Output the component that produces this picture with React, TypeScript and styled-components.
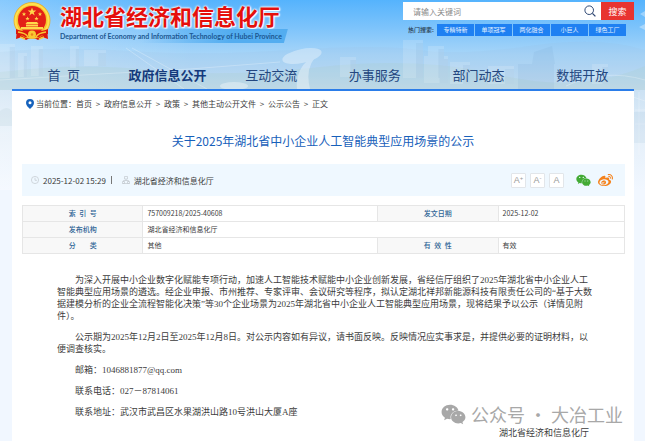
import React from "react";
import styled, { createGlobalStyle } from "styled-components";
import { FaWeixin, FaWeibo } from "react-icons/fa";

const sans = `"Noto Sans CJK SC", "Noto Sans", sans-serif`;

const GlobalStyle = createGlobalStyle`
  * { box-sizing: border-box; }
  body { margin: 0; background: #f1f7ff; font-family: ${sans}; color: #3c3c3c; }
  a { color: inherit; text-decoration: none; }
  button, input { font-family: inherit; }
`;

const Page = styled.div`
  position: relative;
  min-height: 100vh;
  overflow: hidden;
`;

const Backdrop = styled.svg`
  position: absolute;
  top: 0;
  left: 0;
  width: 100%;
  height: 190px;
`;

const Container = styled.div`
  position: relative;
  display: flex;
  flex-direction: column;
  min-height: 100vh;
  margin: 0 11px 0 12px;
`;

const Header = styled.header`
  border-bottom: 2px solid #2b7de9;
`;

const Masthead = styled.div`
  display: flex;
  justify-content: space-between;
  align-items: flex-start;
  height: 60px;
  padding-top: 2px;
`;

const Brand = styled.a`
  display: flex;
  align-items: flex-start;
  gap: 8px;
`;

const EmblemArt = styled.svg`
  width: 40px;
  height: 40px;
`;

const BrandNames = styled.span`
  display: flex;
  flex-direction: column;
  align-items: flex-start;
`;

const SiteName = styled.span`
  font-size: 22px;
  line-height: 27px;
  font-weight: 700;
  color: #e50f0c;
  white-space: nowrap;
  text-shadow: 0 0 2px #fff, 0 0 2px #fff, 0 0 3px #fff, 1px 1px 1px #fff;
`;

const EnglishName = styled.span`
  padding-right: 6px;
  font-family: Lato, "Noto Sans", sans-serif;
  font-size: 7px;
  line-height: 14px;
  font-weight: 700;
  color: #1c5791;
  white-space: nowrap;
  background: linear-gradient(90deg, transparent 35%, #53adf0 75%);
  clip-path: polygon(0 0, 100% 0, calc(100% - 4px) 100%, 0 100%);
`;

const SearchArea = styled.div`
  display: flex;
  flex-direction: column;
  gap: 4px;
  width: 231px;
`;

const SearchForm = styled.form`
  display: flex;
  height: 18px;
  background: #fff;
`;

const SearchInput = styled.input`
  flex: 1;
  min-width: 0;
  border: 0;
  padding: 0 10px;
  background: transparent;
  font-size: 8px;
  color: #333;
  &::placeholder { color: #8a8a8a; }
`;

const GlassIcon = styled.svg`
  align-self: center;
  width: 12px;
  height: 12px;
  margin-right: 5px;
`;

const SearchButton = styled.button`
  width: 33px;
  border: 0;
  padding: 0;
  background: #e83430;
  color: #fff;
  font-size: 9px;
`;

const HotRow = styled.div`
  display: flex;
  align-items: center;
  gap: 1px;
  padding: 0 8px 0 5px;
  font-size: 6px;
  line-height: 12px;
`;

const HotLabel = styled.span`
  flex: 1;
  color: #26384c;
  font-weight: 500;
`;

const HotLink = styled.a`
  width: 37px;
  background: #1e80f2;
  color: #e4f1ff;
  text-align: center;
`;

const Nav = styled.nav`
  display: grid;
  grid-template-columns: repeat(6, 1fr);
  height: 29px;
`;

const NavLink = styled.a<{ $active?: boolean }>`
  font-size: 13px;
  line-height: 29px;
  text-align: center;
  color: ${(p) => (p.$active ? "#143a7c" : "#24477f")};
  font-weight: ${(p) => (p.$active ? 700 : 400)};
`;

const Content = styled.main`
  flex: 1;
  background: #fff;
`;

const Breadcrumb = styled.nav`
  display: flex;
  align-items: center;
  height: 26px;
  padding: 0 14px;
  font-size: 8px;
  line-height: 12px;
  white-space: nowrap;
`;

const PinIcon = styled.svg`
  width: 8px;
  height: 10px;
  margin-right: 2px;
`;

const Crumb = styled.a`
  display: flex;
  &:not(:last-child)::after {
    content: ">";
    width: 12px;
    text-align: center;
  }
`;

const Title = styled.h1`
  margin: 12px 0 11px;
  font-size: 12px;
  line-height: 24px;
  font-weight: 400;
  color: #1760ba;
  text-align: center;
`;

const InfoBar = styled.div`
  display: flex;
  align-items: center;
  height: 32px;
  margin: 0 9px 0 10px;
  padding: 0 12px 0 9px;
  background: #eff8ff;
  font-size: 8px;
`;

const InfoIcon = styled.svg`
  width: 8px;
  height: 8px;
  margin-right: 4px;
`;

const InfoDivider = styled.span`
  width: 1px;
  height: 8px;
  margin: 0 10px 0 5px;
  background: #777;
`;

const Tools = styled.div`
  display: flex;
  align-items: center;
  gap: 4px;
  margin-left: auto;
`;

const SizeButton = styled.button`
  display: flex;
  align-items: center;
  justify-content: center;
  width: 15px;
  height: 15px;
  border: 1px solid #e2e6ea;
  border-radius: 1px;
  padding: 0;
  background: #fff;
  color: #999;
  font-family: "Liberation Sans", sans-serif;
  font-size: 9px;
  line-height: 13px;
  sup { font-size: 6px; line-height: 8px; align-self: flex-start; }
`;

const Shares = styled.div`
  display: flex;
  align-items: center;
  gap: 7px;
  margin-left: 8px;
`;

const ShareLink = styled.a<{ $tint: string }>`
  display: flex;
  font-size: 15px;
  color: ${(p) => p.$tint};
`;

const MetaWrap = styled.div`
  padding: 9px 9px 0 10px;
`;

const MetaTable = styled.table`
  width: 100%;
  border-collapse: collapse;
  table-layout: fixed;
  font-size: 7px;
  line-height: 15px;
  th, td { height: 16px; border: 1px solid #e6e6e6; padding: 0 4px; }
  th { background: #f8f8f8; color: #2f6596; font-weight: 500; text-align: center; }
`;

const Col = styled.col<{ $share: number }>`
  width: ${(p) => p.$share}%;
`;

const Article = styled.article`
  display: flex;
  flex-direction: column;
  gap: 9px;
  padding: 20px 40px 0 45px;
  font-family: "Liberation Serif", "Noto Sans CJK SC", serif;
  font-size: 9px;
  line-height: 12px;
`;

const Paragraph = styled.p`
  margin: 0;
  text-indent: 2em;
`;

const Signature = styled.footer`
  padding: 9px 45px 0;
  font-size: 9px;
  line-height: 12px;
  text-align: right;
`;

const Watermark = styled.div`
  position: absolute;
  right: 11px;
  bottom: 14px;
  display: flex;
  align-items: center;
  gap: 5px;
  font-size: 18px;
  line-height: 26px;
  color: #a8a8a8;
  white-space: nowrap;
  svg { font-size: 25px; }
`;

function CityBackdrop() {
  const towers = [
    [0, 44, 15, 34], [18, 53, 9, 24], [31, 46, 12, 30], [70, 46, 9, 22], [84, 50, 22, 16],
    [340, 57, 16, 20], [403, 40, 20, 38], [428, 46, 16, 32],
    [424, 56, 24, 27], [450, 62, 20, 22], [488, 66, 26, 18], [592, 64, 16, 20],
  ];
  return (
    <Backdrop viewBox="0 0 645 190" preserveAspectRatio="none" aria-hidden="true">
      <defs>
        <linearGradient id="sky" x1="0" y1="0" x2="0" y2="1">
          <stop offset="0" stopColor="#55b3fd" />
          <stop offset="0.15" stopColor="#7ec4fb" />
          <stop offset="0.28" stopColor="#a5d4f8" />
          <stop offset="0.47" stopColor="#cbe1f3" />
          <stop offset="0.7" stopColor="#e4eff9" />
          <stop offset="1" stopColor="#f1f7ff" />
        </linearGradient>
        <linearGradient id="glow" x1="0" y1="0" x2="1" y2="0">
          <stop offset="0" stopColor="#fff" stopOpacity="0.3" />
          <stop offset="0.3" stopColor="#fff" stopOpacity="0" />
        </linearGradient>
      </defs>
      <rect width="645" height="190" fill="url(#sky)" />
      <rect width="645" height="190" fill="url(#glow)" />
      <path d="M0 52Q60 46 130 51T290 50T420 50T530 46T645 50V90H0z" fill="#98bfdf" opacity="0.15" />
      <path d="M0 72Q80 62 150 70T320 67T500 75T645 66V90H0z" fill="#a9cfc5" opacity="0.22" />
      <g fill="#fff" opacity="0.15">
        {towers.map(([x, y, w, h]) => <rect key={x} x={x} y={y} width={w} height={h} />)}
      </g>
      <g fill="#6f9ecb" opacity="0.12">
        {towers.map(([x, y, w, h]) => <rect key={x} x={x + w * 0.65} y={y + 3} width={w * 0.35} height={h - 3} />)}
        <path d="M518 64h36v25h-36zM534 52l18-6 3 18h-23z" />
      </g>
      <g fill="none" stroke="#fff" opacity="0.25">
        <path d="M126 48L184 89M132 48L207 89M0 80L100 74L190 69L280 62" />
        <path d="M566 86Q604 68 645 80M627 95l18 6M635 110h10M635 124h10M639 92V155" />
      </g>
      <g fill="#fff" opacity="0.35">
        <ellipse cx="234" cy="86" rx="14" ry="4" />
        <ellipse cx="302" cy="56" rx="20" ry="7" transform="rotate(-12 302 56)" />
        <path d="M320 53q-16 12-10 36h-13q-2-18 12-30zM640 14l5-3v6zM639 27l6-3v6z" />
      </g>
      <path d="M0 111q7-6 12 0v15H0z" fill="#c6d9e3" opacity="0.35" />
      <path d="M634 112h11v31h-11z" fill="#9cbfda" opacity="0.15" />
    </Backdrop>
  );
}

function Emblem() {
  return (
    <EmblemArt viewBox="0 0 40 40" role="img" aria-label="国徽">
      <path d="M5 27l-1 10 6-2 4 3 6-3 6 3 4-3 6 2-1-10z" fill="#dd180e" />
      <circle cx="20" cy="18.5" r="18" fill="#f7c52c" stroke="#e9a51c" strokeWidth="0.7" />
      <circle cx="20" cy="18.5" r="16.5" fill="none" stroke="#ffe04f" strokeWidth="2" />
      <circle cx="20" cy="18" r="14" fill="#e32117" />
      <path d="M20 5.5l1.1 3h3.2l-2.6 1.9 1 3.1-2.7-1.9-2.7 1.9 1-3.1-2.6-1.9h3.2z" fill="#ffd84b" />
      <g fill="#ffd84b">
        <path d="M12 10l.6 1.4 1.5.1-1.2.9.4 1.5-1.3-.8-1.3.8.4-1.5-1.2-.9 1.5-.1z" />
        <path d="M28 10l.6 1.4 1.5.1-1.2.9.4 1.5-1.3-.8-1.3.8.4-1.5-1.2-.9 1.5-.1z" />
        <path d="M15.5 14.5l.6 1.4 1.5.1-1.2.9.4 1.5-1.3-.8-1.3.8.4-1.5-1.2-.9 1.5-.1z" />
        <path d="M24.5 14.5l.6 1.4 1.5.1-1.2.9.4 1.5-1.3-.8-1.3.8.4-1.5-1.2-.9 1.5-.1z" />
        <path d="M15 20h10l1.5 2h-13zM14 22.500h12v2H14zM9 25h22v2.500H9z" />
      </g>
      <path d="M4 27q8 3 11 2h10q3 1 11-2v5q-7 1-9 3H13q-2-2-9-3z" fill="#dd180e" />
      <path d="M6 30q8 1 10 5M34 30q-8 1-10 5M8 35l5 2M32 35l-5 2" fill="none" stroke="#f9c832" strokeWidth="1.5" />
      <circle cx="20" cy="32.500" r="4" fill="#f9c832" />
      <circle cx="20" cy="32.500" r="1.200" fill="#e9821c" />
    </EmblemArt>
  );
}

const navItems = ["首\u2002页", "政府信息公开", "互动交流", "办事服务", "部门动态", "数据开放"];
const hotItems = ["专精特新", "单项冠军", "两化融合", "小巨人", "绿色工厂"];
const crumbs = ["首页", "政府信息公开", "政策", "其他主动公开文件", "公示公告", "正文"];
const paragraphs = [
  "为深入开展中小企业数字化赋能专项行动，加速人工智能技术赋能中小企业创新发展，省经信厅组织了2025年湖北省中小企业人工智能典型应用场景的遴选。经企业申报、市州推荐、专家评审、会议研究等程序，拟认定湖北祥邦新能源科技有限责任公司的“基于大数据建模分析的企业全流程智能化决策”等30个企业场景为2025年湖北省中小企业人工智能典型应用场景，现将结果予以公示（详情见附件）。",
  "公示期为2025年12月2日至2025年12月8日。对公示内容如有异议，请书面反映。反映情况应实事求是，并提供必要的证明材料，以便调查核实。",
  "邮箱：1046881877@qq.com",
  "联系电话：027－87814061",
  "联系地址：武汉市武昌区水果湖洪山路10号洪山大厦A座",
];

export default function App() {
  return (
    <Page lang="zh-CN">
      <GlobalStyle />
      <CityBackdrop />
      <Container>
        <Header>
          <Masthead>
            <Brand href="#">
              <Emblem />
              <BrandNames>
                <SiteName>湖北省经济和信息化厅</SiteName>
                <EnglishName>Department of Economy and Information Technology of Hubei Province</EnglishName>
              </BrandNames>
            </Brand>
            <SearchArea>
              <SearchForm role="search" onSubmit={(e) => e.preventDefault()}>
                <SearchInput type="text" placeholder="请输入关键词" aria-label="请输入关键词" />
                <GlassIcon viewBox="0 0 12 12" aria-hidden="true">
                  <circle cx="5.2" cy="5.200" r="4.300" fill="none" stroke="#2d4672" strokeWidth="1" />
                  <path d="M8.400 8.400l3 3" stroke="#2d4672" strokeWidth="1.300" />
                </GlassIcon>
                <SearchButton type="submit">搜索</SearchButton>
              </SearchForm>
              <HotRow>
                <HotLabel>热门搜索:</HotLabel>
                {hotItems.map((t) => <HotLink key={t} href="#">{t}</HotLink>)}
              </HotRow>
            </SearchArea>
          </Masthead>
          <Nav>
            {navItems.map((t, i) => <NavLink key={t} href="#" $active={i === 1}>{t}</NavLink>)}
          </Nav>
        </Header>
        <Content>
          <Breadcrumb aria-label="当前位置">
            <PinIcon viewBox="0 0 8 10" aria-hidden="true">
              <path d="M4 0a4 4 0 0 1 4 4c0 2.500-2.500 4.500-4 6C2.500 8.500 0 6.500 0 4a4 4 0 0 1 4-4z" fill="#1763bd" />
              <circle cx="4" cy="3.800" r="1.500" fill="#fff" />
            </PinIcon>
            <span>当前位置：</span>
            {crumbs.map((t) => <Crumb key={t} href="#">{t}</Crumb>)}
          </Breadcrumb>
          <Title>关于2025年湖北省中小企业人工智能典型应用场景的公示</Title>
          <InfoBar>
            <InfoIcon viewBox="0 0 8 8" fill="none" stroke="#c3c9ce" strokeWidth="0.7" aria-hidden="true">
              <circle cx="4" cy="4" r="3.600" /><path d="M4 1.800V4.300h2" />
            </InfoIcon>
            <time dateTime="2025-12-02T15:29">2025-12-02 15:29</time>
            <InfoDivider />
            <InfoIcon viewBox="0 0 8 8" fill="none" stroke="#c3c9ce" strokeWidth="0.7" aria-hidden="true">
              <path d="M2.500.5h3v2.500h-3zM4 3v2M1.500 6V4.500h5V6M.5 5.500h2v2h-2zM5.500 5.500h2v2h-2zM.5 7.500h7" />
            </InfoIcon>
            <span>湖北省经济和信息化厅</span>
            <Tools>
              <SizeButton type="button" aria-label="放大字号">A<sup>+</sup></SizeButton>
              <SizeButton type="button" aria-label="缩小字号">A<sup>-</sup></SizeButton>
              <SizeButton type="button" aria-label="默认字号">A</SizeButton>
              <Shares>
                <ShareLink href="#" aria-label="微信" $tint="#43ab35"><FaWeixin /></ShareLink>
                <ShareLink href="#" aria-label="微博" $tint="#f5821c"><FaWeibo /></ShareLink>
              </Shares>
            </Tools>
          </InfoBar>
          <MetaWrap>
            <MetaTable>
              <colgroup><Col $share={20} /><Col $share={39} /><Col $share={20} /><Col $share={21} /></colgroup>
              <tbody>
                <tr><th scope="row">索&ensp;引&ensp;号</th><td>757009218/2025-40608</td><th scope="row">发文日期</th><td>2025-12-02</td></tr>
                <tr><th scope="row">发布机构</th><td colSpan={3}>湖北省经济和信息化厅</td></tr>
                <tr><th scope="row">分&emsp;&emsp;类</th><td>其他</td><th scope="row">有&ensp;效&ensp;性</th><td>有效</td></tr>
              </tbody>
            </MetaTable>
          </MetaWrap>
          <Article>
            {paragraphs.map((t) => <Paragraph key={t}>{t}</Paragraph>)}
          </Article>
          <Signature>湖北省经济和信息化厅</Signature>
        </Content>
        <Watermark><FaWeixin aria-hidden="true" /><span>公众号 · 大冶工业</span></Watermark>
      </Container>
    </Page>
  );
}
